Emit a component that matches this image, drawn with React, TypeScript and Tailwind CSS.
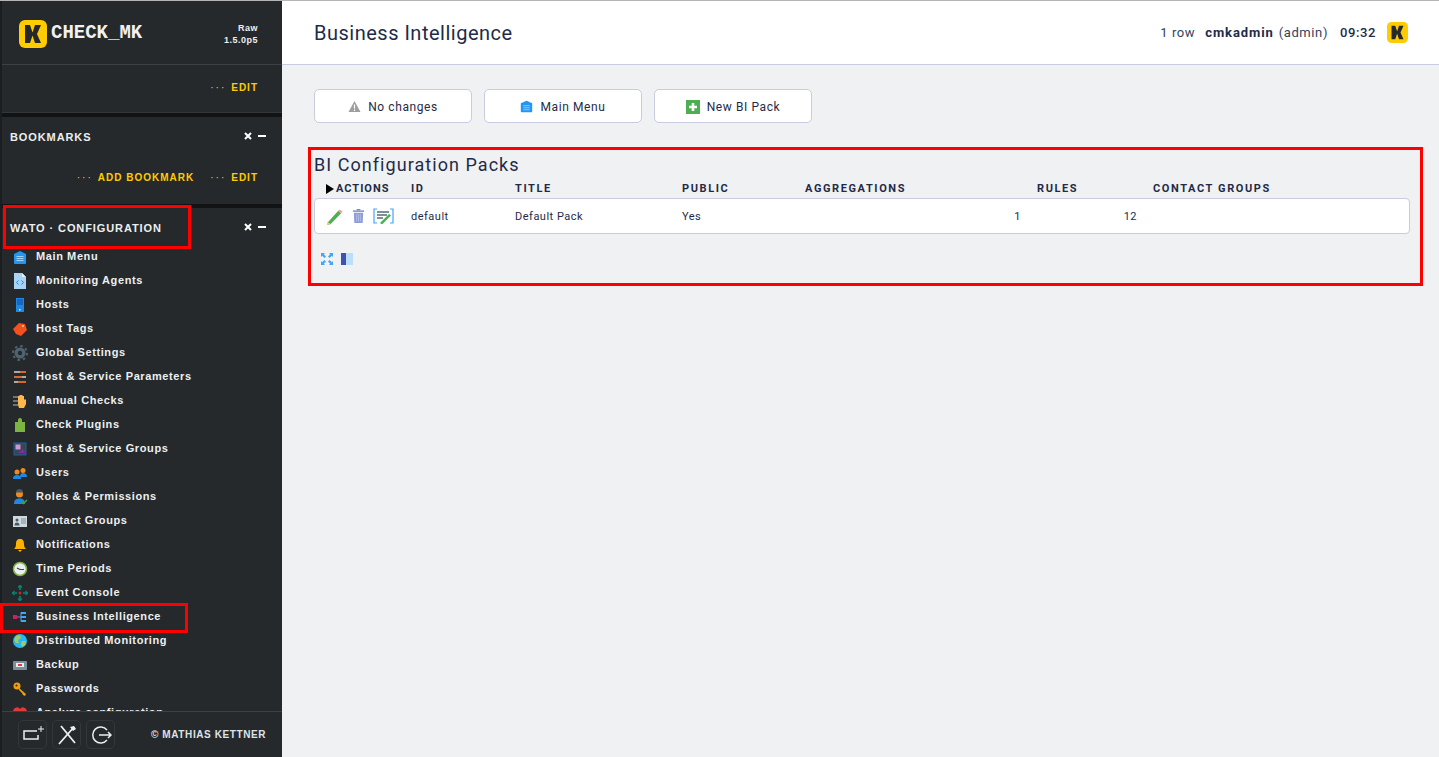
import type { ReactNode } from 'react';

function LogoK({ size }: { size: number }) {
  return (
    <svg width={size} height={size} viewBox="0 0 28 28">
      <rect x="0" y="0" width="28" height="28" rx="6" fill="#ffcc00" />
      <path d="M6 5h5l3 9-3 9H6zM16 5h6l-4 9 4 9h-6l-3-9z" fill="#26292b" />
    </svg>
  );
}

const I = ({ children }: { children: ReactNode }) => (
  <svg width="16" height="16" viewBox="0 0 16 16">
    {children}
  </svg>
);

const HomeIcon = () => (
  <I>
    <path d="M8 2l6 3v9a1 1 0 0 1-1 1H3a1 1 0 0 1-1-1V5z" fill="#2196f3" />
    <path d="M4.500 7.500h7M4.500 9.500h7M4.500 11.500h7" stroke="#9fd2fb" strokeWidth="1" />
  </I>
);

const MENU: { label: string; icon: ReactNode }[] = [
  { label: 'Main Menu', icon: <HomeIcon /> },
  {
    label: 'Monitoring Agents',
    icon: (
      <I>
        <path d="M2 0h8l4 4v12H2z" fill="#a9d3f5" />
        <path d="M10 0l4 4h-4z" fill="#e3f2fd" />
        <path d="M6.500 7.500l-2 2 2 2M9.500 7.500l2 2-2 2" stroke="#1e88e5" strokeWidth="1" fill="none" />
      </I>
    ),
  },
  {
    label: 'Hosts',
    icon: (
      <I>
        <rect x="4" y="1" width="8" height="14" fill="#1e88e5" />
        <path d="M5 3h6M5 5h6M5 7h6" stroke="#0d47a1" strokeWidth="1" />
        <rect x="7" y="12" width="1.500" height="1.500" fill="#e3f2fd" />
      </I>
    ),
  },
  {
    label: 'Host Tags',
    icon: (
      <I>
        <path d="M1 8l6-6 6 1 2 6-6 6-5-2z" fill="#f4511e" />
        <circle cx="11" cy="5" r="1" fill="#ffccbc" />
      </I>
    ),
  },
  {
    label: 'Global Settings',
    icon: (
      <I>
        <circle cx="8" cy="8" r="5.500" fill="#4f6470" />
        <circle cx="8" cy="8" r="7" fill="none" stroke="#4f6470" strokeWidth="2" strokeDasharray="2.500 3" />
        <circle cx="8" cy="8" r="2.200" fill="#26292b" />
      </I>
    ),
  },
  {
    label: 'Host & Service Parameters',
    icon: (
      <I>
        <path d="M2 3h12M2 8h12M2 13h12" stroke="#cfd8dc" strokeWidth="1.500" />
        <path d="M8 3h6M2 8h8M6 13h8" stroke="#e65100" strokeWidth="1.500" />
      </I>
    ),
  },
  {
    label: 'Manual Checks',
    icon: (
      <I>
        <path d="M1 4h5M1 8h5M1 12h5" stroke="#b0bec5" strokeWidth="1.200" />
        <path d="M6 8V3h1.500v3V2H9v4V2h1.500v4V3H12v4l1-1 1 1v4l-2 4H7l-1-3z" fill="#ffb74d" />
      </I>
    ),
  },
  {
    label: 'Check Plugins',
    icon: (
      <I>
        <path d="M3 5h3V3a2 2 0 0 1 4 0v2h3v10H3z" fill="#7cb342" />
      </I>
    ),
  },
  {
    label: 'Host & Service Groups',
    icon: (
      <I>
        <rect x="2" y="2" width="12" height="12" fill="#37474f" stroke="#1e5fa8" strokeWidth="1" />
        <rect x="3.500" y="3.500" width="5" height="5" fill="#ce93d8" />
        <path d="M6 12l5-4 2 4z" fill="#8e24aa" />
      </I>
    ),
  },
  {
    label: 'Users',
    icon: (
      <I>
        <circle cx="5" cy="7" r="2.500" fill="#ef8a1f" />
        <path d="M1 14c0-3 1.500-4 4-4s4 1 4 4z" fill="#1e88e5" />
        <circle cx="11" cy="5.500" r="2.500" fill="#ef8a1f" />
        <path d="M8 12c0-3 1-4 3-4s4 1 4 4z" fill="#1e88e5" />
      </I>
    ),
  },
  {
    label: 'Roles & Permissions',
    icon: (
      <I>
        <circle cx="7.500" cy="5" r="3.500" fill="#ef8a1f" />
        <path d="M4 3.500a3.500 3.500 0 0 1 7 0z" fill="#455a64" />
        <path d="M2 15c0-4 2-5.500 5.500-5.500S13 11 13 15z" fill="#1e88e5" />
        <path d="M10 13l1.500 1.500L15 11" stroke="#43a047" strokeWidth="1.500" fill="none" />
      </I>
    ),
  },
  {
    label: 'Contact Groups',
    icon: (
      <I>
        <rect x="1" y="3" width="14" height="11" fill="#cfd8dc" />
        <circle cx="5" cy="7" r="1.500" fill="#455a64" />
        <path d="M2.500 12.500c0-2 1-3 2.500-3s2.500 1 2.500 3z" fill="#455a64" />
        <path d="M9 6h5M9 8h5M9 10h5" stroke="#78909c" strokeWidth="1" />
      </I>
    ),
  },
  {
    label: 'Notifications',
    icon: (
      <I>
        <path d="M8 2c3 0 4 2 4 5 0 3 1 4 2 5H2c1-1 2-2 2-5 0-3 1-5 4-5z" fill="#ffb300" />
        <path d="M6 13h4l-2 2z" fill="#ffb300" />
      </I>
    ),
  },
  {
    label: 'Time Periods',
    icon: (
      <I>
        <circle cx="8" cy="8" r="6.500" fill="#eceff1" stroke="#7cb342" strokeWidth="1.500" />
        <path d="M8 8.500H12M8 8.500L5 7" stroke="#37474f" strokeWidth="1.200" />
      </I>
    ),
  },
  {
    label: 'Event Console',
    icon: (
      <I>
        <path d="M8 0v5M8 11v5M0 8h5M11 8h5" stroke="#00897b" strokeWidth="1.600" />
        <path d="M6 2.500L8 .5 10 2.500M6 13.500L8 15.500 10 13.500M2.500 6L.5 8 2.500 10M13.500 6L15.500 8 13.500 10" stroke="#00897b" strokeWidth="1.200" fill="none" />
        <circle cx="8" cy="8" r="1.500" fill="#c62828" />
      </I>
    ),
  },
  {
    label: 'Business Intelligence',
    icon: (
      <I>
        <rect x="1" y="6" width="4" height="4" fill="#d81b60" />
        <path d="M5 8h4M9 3.500v9" stroke="#4a90d9" strokeWidth="1.200" />
        <path d="M9 3h5v2H9zM9 7h5v2H9zM9 11h5v2H9z" fill="#42a5f5" />
      </I>
    ),
  },
  {
    label: 'Distributed Monitoring',
    icon: (
      <I>
        <circle cx="8" cy="8" r="7" fill="#29b6f6" />
        <path d="M4 3l4-1 1 3-3 2 1 3-3 0-2-3zM10 8l4 0-1 4-3 2-1-3z" fill="#9ccc65" />
      </I>
    ),
  },
  {
    label: 'Backup',
    icon: (
      <I>
        <rect x="1" y="4" width="14" height="9" rx="1" fill="#78909c" />
        <rect x="4" y="6" width="8" height="4" fill="#eceff1" />
        <rect x="6" y="7" width="4" height="2" fill="#e53935" />
      </I>
    ),
  },
  {
    label: 'Passwords',
    icon: (
      <I>
        <circle cx="5" cy="5" r="3.500" fill="#f59e0b" />
        <path d="M7 7l7 6-1 2-2-1-1-2-3-3z" fill="#f59e0b" />
        <circle cx="4.500" cy="4.500" r="1" fill="#26292b" />
      </I>
    ),
  },
  {
    label: 'Analyze configuration',
    icon: (
      <I>
        <path d="M8 15L2 8a3.500 3.500 0 0 1 6-4 3.500 3.500 0 0 1 6 4z" fill="#e53935" />
      </I>
    ),
  },
];

function Snapin({ title }: { title: string }) {
  return (
    <div className="flex h-[40px] items-center justify-between pl-2 pr-[14px] text-[11px] tracking-[0.9px] text-[#eceff1]">
      <span>{title}</span>
      <span className="mr-[2px] flex items-center gap-[6px] pb-[3px]">
        <svg width="8" height="8" viewBox="0 0 8 8">
          <path d="M1 1l6 6M7 1l-6 6" stroke="#fff" strokeWidth="2" />
        </svg>
        <span className="h-[2px] w-[8px] bg-white" />
      </span>
    </div>
  );
}

function Sidebar() {
  const link = 'flex gap-[5px] items-center text-[#ffcc00]';
  return (
    <aside className="flex h-full w-[282px] shrink-0 flex-col border-l-2 border-[#1b1e20] bg-[#26292b] font-['Liberation_Sans',sans-serif] font-bold">
      <div className="flex h-[64px] shrink-0 items-center justify-between border-b border-[#3d4145] pl-[17px] pr-[24px] pt-[2px]">
        <div className="flex items-center gap-[4px]">
          <LogoK size={28} />
          <span className="inline-block scale-y-110 font-['Liberation_Mono',monospace] text-[19px] font-bold leading-none text-[#f1f1f1]">
            CHECK<span className="text-[#ffcc00]">_</span>MK
          </span>
        </div>
        <div className="text-right text-[9px] leading-[12px] tracking-[0.5px] text-[#eceff1]">
          <div>Raw</div>
          <div>1.5.0p5</div>
        </div>
      </div>

      <div className="flex h-[48px] shrink-0 items-center justify-end border-b border-[#34373a] pb-[2px] pr-[24px] text-[10px] tracking-[1px]">
        <span className={link}>
          <span className="font-normal tracking-[2px]">···</span>EDIT
        </span>
      </div>
      <div className="h-[4px] shrink-0 bg-[#111314]" />

      <div className="shrink-0">
        <Snapin title="BOOKMARKS" />
        <div className="flex h-[47px] items-start justify-end gap-[16px] pr-[24px] pt-[15px] text-[10px] leading-[12px] tracking-[1px]">
          <span className={link}>
            <span className="font-normal tracking-[2px]">···</span>ADD BOOKMARK
          </span>
          <span className={link}>
            <span className="font-normal tracking-[2px]">···</span>EDIT
          </span>
        </div>
      </div>
      <div className="h-[4px] shrink-0 bg-[#111314]" />

      <div className="min-h-0 flex-1 overflow-hidden">
        <Snapin title="WATO · CONFIGURATION" />
        <div className="-mt-[4px]">
          {MENU.map((m) => (
            <div key={m.label} className="flex h-[24px] items-center gap-[8px] pl-[10px] text-[11px] tracking-[0.6px] text-[#eceff1]">
              <span className="relative top-[1px] flex w-[16px] justify-center">{m.icon}</span>
              <span className="whitespace-nowrap">{m.label}</span>
            </div>
          ))}
        </div>
      </div>

      <div className="flex h-[46px] shrink-0 items-center border-t border-[#3d4145] pl-[16px]">
        <div className="flex gap-[5px]">
          <FootBtn>
            <path d="M15 7H2v8h14V11" stroke="#eee" strokeWidth="1.500" fill="none" />
            <path d="M19 2v6M16 5h6" stroke="#eee" strokeWidth="1" fill="none" />
          </FootBtn>
          <FootBtn>
            <path d="M5 2l14 17M3 20L18 3" stroke="#eee" strokeWidth="1.800" fill="none" />
            <path d="M14 3l4-1 2 3-3 2z" fill="#eee" />
          </FootBtn>
          <FootBtn>
            <path d="M17 6a8 8 0 1 0 0 10M9 11h12M18 8l3 3-3 3" stroke="#eee" strokeWidth="1.500" fill="none" />
          </FootBtn>
        </div>
        <span className="ml-[36px] text-[10px] tracking-[0.6px] text-[#dfe3e6]">© MATHIAS KETTNER</span>
      </div>
    </aside>
  );
}

function FootBtn({ children }: { children: ReactNode }) {
  return (
    <span className="flex h-[29px] w-[29px] items-center justify-center rounded-[5px] border border-[#34373a]">
      <svg width="22" height="22" viewBox="0 0 22 22">
        {children}
      </svg>
    </span>
  );
}

function ActionBtn({ icon, label }: { icon: ReactNode; label: string }) {
  return (
    <div className="flex h-[34px] w-[158px] items-center justify-center gap-[7px] rounded-[5px] border border-[#c9cbe0] bg-white pt-[1px] text-[12px] tracking-[0.6px] text-[#1e2b48]">
      {icon}
      <span>{label}</span>
    </div>
  );
}

function Main() {
  return (
    <main className="relative min-w-0 flex-1 font-['Roboto',sans-serif]">
      <header className="flex h-[64px] items-center justify-between border-b border-[#c9cbe0] bg-white pl-[32px] pr-[31px]">
        <h1 className="text-[20px] font-normal tracking-[0.5px] text-[#1e2b48]">Business Intelligence</h1>
        <div className="flex items-center text-[13px] tracking-[0.6px] text-[#1e2b48]">
          <span className="mr-[10px] text-[#33415f]">1 row</span>
          <b className="font-bold tracking-[0.9px]">cmkadmin</b>
          <span className="ml-[5px] text-[#33415f]">(admin)</span>
          <b className="ml-[12px] font-medium">09:32</b>
          <span className="ml-[11px]">
            <LogoK size={21} />
          </span>
        </div>
      </header>

      <div className="flex gap-[12px] pl-[32px] pt-[24px]">
        <ActionBtn
          label="No changes"
          icon={
            <svg width="13" height="13" viewBox="0 0 13 13">
              <path d="M6.500 1L12.500 12H.5z" fill="#9e9e9e" />
              <path d="M6.500 4.500v4M6.500 9.500v1.500" stroke="#fff" strokeWidth="1.200" />
            </svg>
          }
        />
        <ActionBtn
          label="Main Menu"
          icon={
            <svg width="13" height="13" viewBox="0 0 16 16">
              <path d="M8 1l7 3v10a1 1 0 0 1-1 1H2a1 1 0 0 1-1-1V4z" fill="#2196f3" />
              <path d="M4 7h8M4 9.500h8M4 12h8" stroke="#a9d6fb" strokeWidth="1" />
            </svg>
          }
        />
        <ActionBtn
          label="New BI Pack"
          icon={
            <svg width="14" height="14" viewBox="0 0 14 14">
              <rect width="14" height="14" fill="#4caf50" />
              <path d="M7 3v8M3 7h8" stroke="#fff" strokeWidth="2.600" />
            </svg>
          }
        />
      </div>

      <section className="ml-[26px] mt-[24px] h-[139px] w-[1115px] border-[3px] border-[#ff0000] pl-[3px] pr-[10px]">
        <h2 className="pt-[4px] text-[18px] font-normal leading-[22px] tracking-[1.050px] text-[#1e2b48]">
          BI Configuration Packs
        </h2>
        <div className="mt-[6px] flex h-[14px] items-center text-[11px] font-bold tracking-[1.600px] text-[#1e2b48]">
          <span className="flex w-[97px] items-center pl-[11px] tracking-[1px]">
            <svg width="9" height="10" viewBox="0 0 9 10" className="mr-[2px]">
              <path d="M1 0l8 5-8 5z" fill="#000" />
            </svg>
            ACTIONS
          </span>
          <span className="w-[104px]">ID</span>
          <span className="w-[167px]">TITLE</span>
          <span className="w-[123px]">PUBLIC</span>
          <span className="w-[232px]">AGGREGATIONS</span>
          <span className="w-[116px]">RULES</span>
          <span>CONTACT GROUPS</span>
        </div>
        <div className="mt-[2px] flex h-[36px] items-center rounded-[4px] border border-[#c9cbe0] bg-white text-[11px] tracking-[0.5px] text-[#1e2b48]">
          <span className="flex w-[96px] items-center gap-[8px] pl-[11px]">
            <svg width="17" height="17" viewBox="0 0 18 18">
              <path d="M2 15L13 3l3 2.500L5 17l-3.500 1z" fill="#4caf50" />
              <path d="M13 3l1.500-1.500 3 2.500L16 5.500z" fill="#ef9a9a" />
              <path d="M1.500 18l.7-3 2.800 2z" fill="#f4c28a" />
            </svg>
            <svg width="13" height="16" viewBox="0 0 14 16" className="ml-[1px]">
              <path d="M1 2h12v1.500H1z" fill="#7986cb" />
              <path d="M5 .5h4V2H5z" fill="#7986cb" />
              <path d="M2 4.500h10l-.5 11h-9z" fill="#8c9eda" />
              <path d="M5 6v8M7 6v8M9 6v8" stroke="#c5cae9" strokeWidth=".7" />
            </svg>
            <svg width="21" height="16" viewBox="0 0 21 16">
              <path d="M4 1H1v14h3M17 1h3v14h-3" stroke="#42a5f5" strokeWidth="1.200" fill="none" />
              <path d="M4 4h12M4 7h10M4 10h6" stroke="#546e7a" strokeWidth="1.500" />
              <path d="M7 15L16 6l2 1.500-9 9z" fill="#4caf50" />
            </svg>
          </span>
          <span className="w-[104px] pt-[2px]">default</span>
          <span className="w-[167px] pt-[2px]">Default Pack</span>
          <span className="w-[123px] pt-[2px]">Yes</span>
          <span className="w-[216px] pt-[2px] text-right">1</span>
          <span className="w-[116px] pt-[2px] text-right">12</span>
        </div>
        <div className="mt-[19px] flex items-center gap-[8px] pl-[7px]">
          <svg width="12" height="12" viewBox="0 0 12 12">
            <path
              d="M0 0h4L2.800 1.200 5 3.400 3.400 5 1.200 2.800 0 4zM12 0v4l-1.200-1.200L8.600 5 7 3.400l2.200-2.200L8 0zM0 12V8l1.200 1.200L3.400 7 5 8.600l-2.200 2.200L4 12zM12 12H8l1.200-1.200L7 8.600 8.600 7l2.200 2.200L12 8z"
              fill="#42a5f5"
            />
          </svg>
          <svg width="12" height="12" viewBox="0 0 12 12">
            <rect width="12" height="12" fill="#bbdefb" />
            <rect width="5" height="12" fill="#3f51b5" />
          </svg>
        </div>
      </section>
    </main>
  );
}

export default function App() {
  return (
    <div className="relative flex h-[757px] w-[1439px] overflow-hidden border-t border-[#b5b5b5] bg-[#f0f1f3]">
      <Sidebar />
      <Main />
      {/* red annotations over the sidebar */}
      <div className="pointer-events-none absolute left-[3px] top-[204px] h-[44px] w-[188px] border-[3px] border-[#ff0000]" />
      <div className="pointer-events-none absolute left-0 top-[602px] h-[30px] w-[188px] border-[3px] border-[#ff0000]" />
    </div>
  );
}
